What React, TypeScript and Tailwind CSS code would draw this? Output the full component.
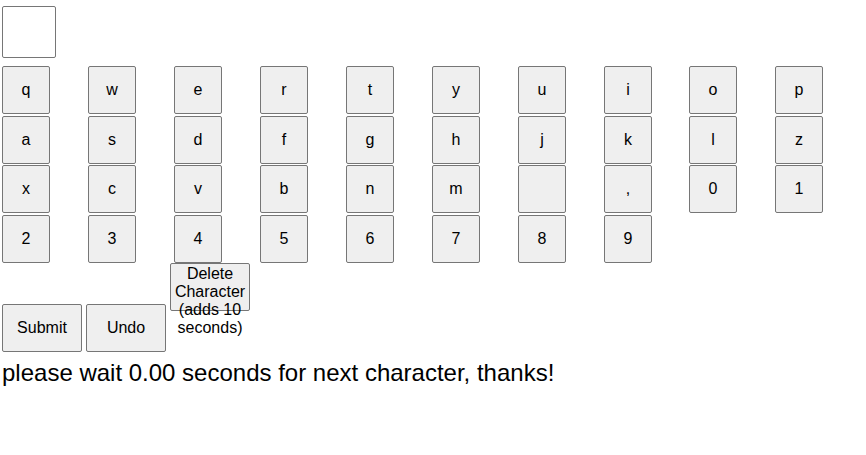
import React from 'react';

const rows: string[][] = [
    ['q', 'w', 'e', 'r', 't', 'y', 'u', 'i', 'o', 'p'],
    ['a', 's', 'd', 'f', 'g', 'h', 'j', 'k', 'l', 'z'],
    ['x', 'c', 'v', 'b', 'n', 'm', ' ', ',', '0', '1'],
    ['2', '3', '4', '5', '6', '7', '8', '9'],
];

const btn = "bg-[#efefef] border border-[#767676] rounded-[2px] text-black text-[16px] leading-[18px]";

const App: React.FC = () => {
    return (
        <div className="pt-[6px] pl-[2px] text-black" style={{ fontFamily: '"Liberation Sans", Arial, sans-serif' }}>
            <div className="w-[54px] h-[52px] bg-white border border-[#767676] rounded-[2px]"></div>

            <div className="mt-2 flex flex-col gap-y-[1.6px]">
                {rows.map((row, rowIndex) => (
                    <div key={rowIndex} className="grid grid-cols-[86px_86px_86px_86px_86px_86px_86px_85px_86px_86px]">
                        {row.map((key, keyIndex) => (
                            <div key={keyIndex}>
                                <button className={`${btn} w-[48px] h-[48px] flex items-center justify-center`}>
                                    {key}
                                </button>
                            </div>
                        ))}
                    </div>
                ))}
            </div>

            <div className="flex gap-1 h-[89px] items-end">
                <button className={`${btn} w-[80px] h-[48px]`}>Submit</button>
                <button className={`${btn} w-[80px] h-[48px]`}>Undo</button>
                <button className={`${btn} w-[80px] h-[48px] self-start flex flex-col items-center justify-start overflow-visible pt-px`}>
                    <span className="whitespace-nowrap">Delete</span>
                    <span className="whitespace-nowrap">Character</span>
                    <span className="whitespace-nowrap">(adds 10</span>
                    <span className="whitespace-nowrap">seconds)</span>
                </button>
            </div>

            <p className="mt-[3px] text-[24px] leading-normal">
                please wait 0.00 seconds for next character, thanks!
            </p>
        </div>
    );
};

export default App;
